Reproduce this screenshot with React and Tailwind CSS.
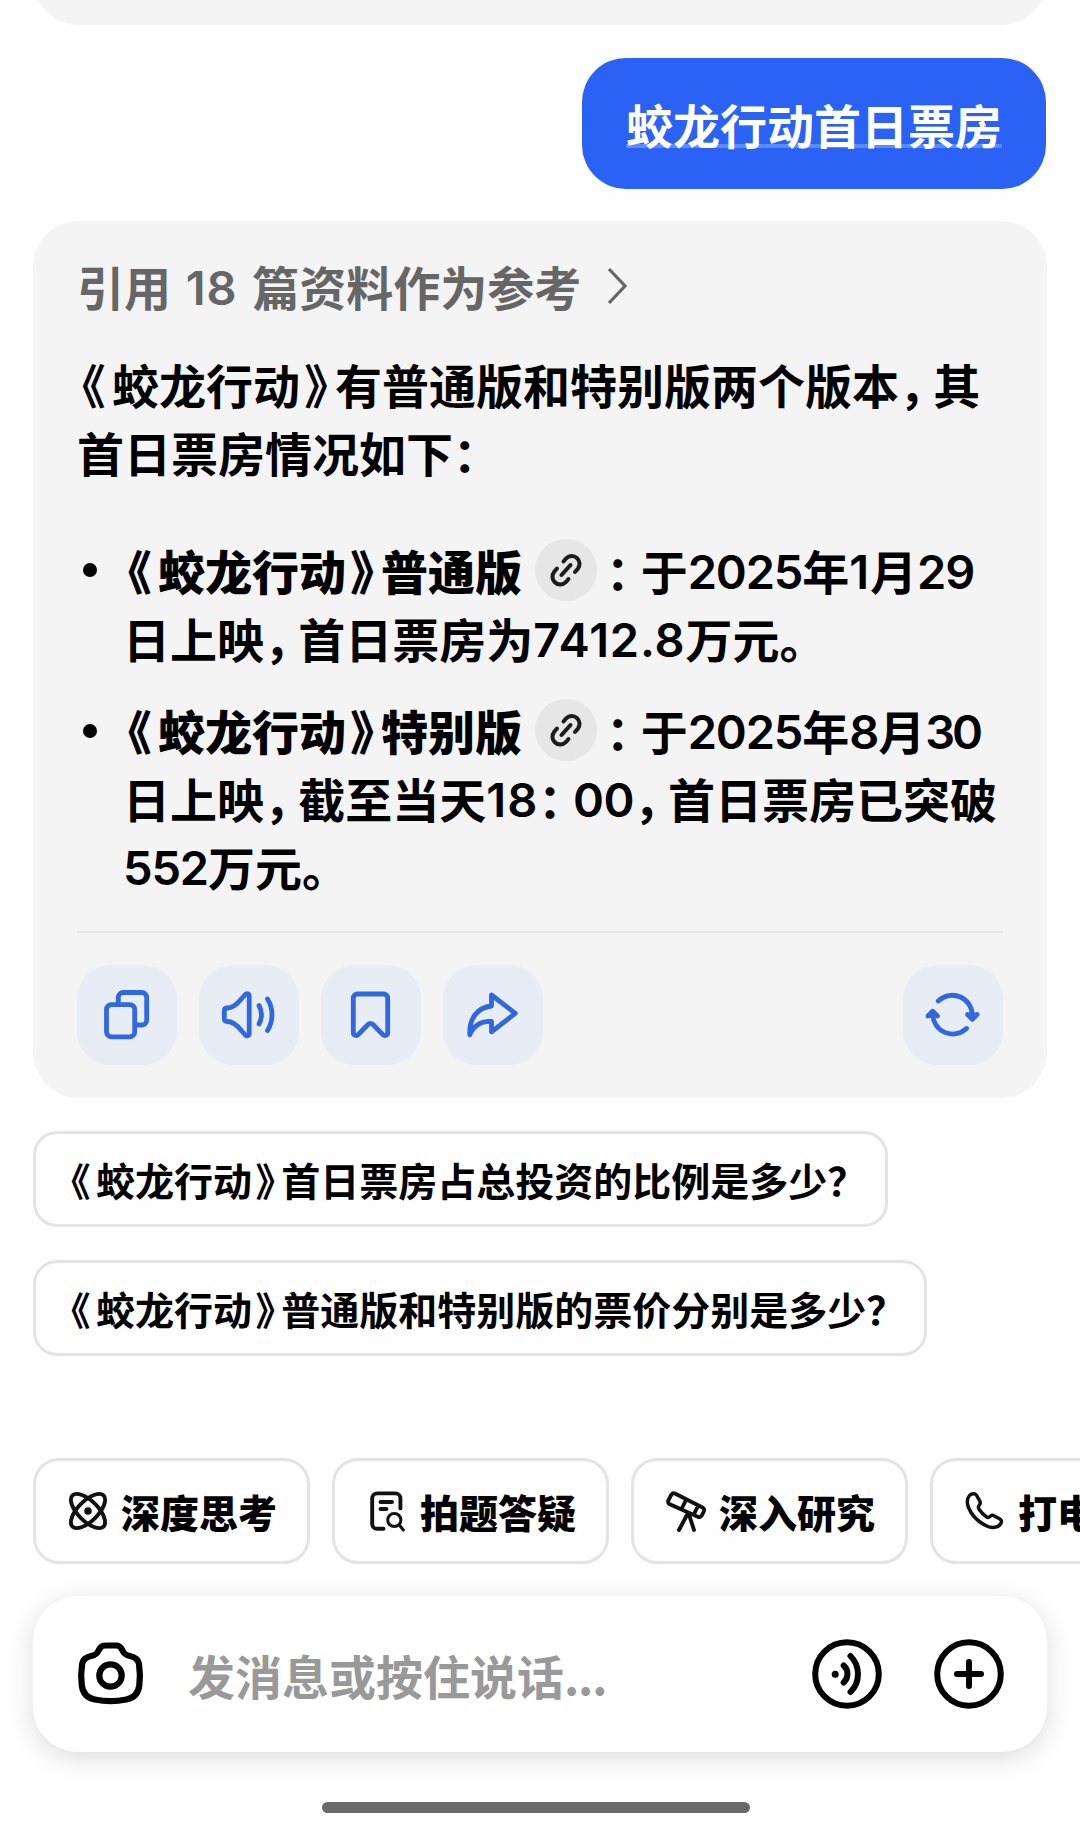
import React from "react";

// Full-width punctuation is set tighter than one em
const punctuation = {
    "《": "[font-feature-settings:'halt'] ml-[0.105em] mr-[0.14em]",
    "》": "[font-feature-settings:'halt'] ml-[0.09em] mr-[0.155em]",
    "，": "[font-feature-settings:'halt'] mr-[0.23em]",
    "：": "[font-feature-settings:'halt'] mr-[0.24em]",
    "？": "[font-feature-settings:'halt']",
};

const digitTracking = {
    "1": "tracking-[0.02em]",
    "18": "tracking-[0.022em]",
    "7412.8": "tracking-[0.018em]",
    "00": "tracking-[-0.015em]",
    "30": "tracking-[-0.065em]",
};

function Zh({ children }) {
    const parts = children.split(/([《》，：？]|[0-9.]+)/).filter(Boolean);
    return (
        <>
            {parts.map((part, i) => {
                if (punctuation[part]) {
                    return <span key={i} className={punctuation[part]}>{part}</span>;
                }
                if (/^[0-9.]+$/.test(part)) {
                    const tracking = digitTracking[part] || "tracking-[-0.025em]";
                    return <span key={i} className={`relative -top-px font-[Inter,sans-serif] leading-none ${tracking}`}>{part}</span>;
                }
                return part;
            })}
        </>
    );
}

function LinkBadge() {
    return (
        <span className="ml-[13px] mr-[9px] inline-flex size-[62px] items-center justify-center rounded-full bg-[#e6e6e6]">
            <svg width="34" height="34" viewBox="0 0 34 34" fill="none" stroke="#1c1c1c" strokeWidth="4" strokeLinecap="round">
                <path d="M14.500 8.500l2.700-3.200a7.800 7.800 0 0 1 11.600 10.400L26 19" />
                <path d="M19.500 26l-2.700 3.200A7.800 7.800 0 0 1 5.200 18.800L8 15.500" />
                <path d="M12.500 22l9-10" />
            </svg>
        </span>
    );
}

function ActionButton({ children }) {
    return (
        <button className="flex size-[100px] items-center justify-center rounded-[34px] bg-[#e7ecf5]">
            <svg width="60" height="60" viewBox="0 0 60 60" fill="none" stroke="#3068e0" strokeWidth="4.8" strokeLinecap="round" strokeLinejoin="round">
                {children}
            </svg>
        </button>
    );
}

function Answer() {
    return (
        <div className="mx-[33px] mt-[32px] flex h-[877px] flex-col rounded-[46px] bg-[#f4f4f4] px-[44px] text-[47px] leading-[68px] font-semibold whitespace-nowrap text-black">
            <div className="mt-[31px] flex items-center text-[#666]">
                <span className="[word-spacing:4px]"><Zh>引用 18 篇资料作为参考</Zh></span>
                <svg className="ml-[26px]" width="22" height="38" viewBox="0 0 22 38" fill="none" stroke="#666" strokeWidth="3.2">
                    <path d="M2 2l16 17L2 36" />
                </svg>
            </div>

            <div className="mt-[30px]">
                <p><Zh>《蛟龙行动》有普通版和特别版两个版本，其</Zh></p>
                <p><Zh>首日票房情况如下：</Zh></p>
            </div>

            <ul className="mt-[50px] flex flex-col gap-[24px]">
                <li className="flex">
                    <span className="mt-[27px] mr-[26px] ml-[6px] size-[14px] rounded-full bg-black" />
                    <div>
                        <div className="flex h-[68px] items-center">
                            <strong className="font-black"><Zh>《蛟龙行动》普通版</Zh></strong>
                            <LinkBadge />
                            <span><Zh>：于2025年1月29</Zh></span>
                        </div>
                        <p><Zh>日上映，首日票房为7412.8万元。</Zh></p>
                    </div>
                </li>
                <li className="flex">
                    <span className="mt-[28px] mr-[26px] ml-[6px] size-[14px] rounded-full bg-black" />
                    <div>
                        <div className="flex h-[68px] items-center">
                            <strong className="font-black"><Zh>《蛟龙行动》特别版</Zh></strong>
                            <LinkBadge />
                            <span><Zh>：于2025年8月30</Zh></span>
                        </div>
                        <p><Zh>日上映，截至当天18：00，首日票房已突破</Zh></p>
                        <p><Zh>552万元。</Zh></p>
                    </div>
                </li>
            </ul>

            <div className="mt-auto h-[2px] w-[926px] bg-[#e4e4e4]" />
            <div className="mt-[32px] mb-[33px] flex w-[926px] gap-[22px]">
                {/* Copy */}
                <ActionButton>
                    <path d="M21.300 18v-5.500a5 5 0 0 1 5-5h18.400a5 5 0 0 1 5 5V35a5 5 0 0 1-5 5h-5" />
                    <rect x="9.500" y="19.600" width="28.200" height="32.200" rx="5" />
                </ActionButton>
                {/* Read aloud */}
                <ActionButton>
                    <path d="M5.300 26c0-2 1-3 3-3 6 0 10-4 14-9l4-4.500c1.500-1.600 3.900-.8 3.900 1.500v37.500c0 2.300-2.400 3.100-3.900 1.500l-4-4.500c-4-5-8-9-14-9-2 0-3-1-3-3z" />
                    <path d="M40 20.500c3.200 6 3.200 12.500 0 18.500M48.500 14c6 9.500 6 22 0 31.500" />
                </ActionButton>
                {/* Bookmark */}
                <ActionButton>
                    <path d="M12.300 13a4 4 0 0 1 4-4h26.400a4 4 0 0 1 4 4v34.500c0 3-3 4-5 2L32 39.500c-1.500-1.500-3.500-1.500-5 0L17.300 49.500c-2 2-5 1-5-2z" />
                </ActionButton>
                {/* Share */}
                <ActionButton>
                    <path d="M28.500 10L52.300 28.300 28.500 46.800V36.500C18 36 11 40 6.800 49.800 6 34 14 22.500 28.500 21z" />
                </ActionButton>
                {/* Regenerate */}
                <span className="ml-auto">
                    <ActionButton>
                        <path d="M15.300 16A20 20 0 0 1 49.300 31" />
                        <path d="M44.500 29.500l4.800 4.800 4.800-4.800-4.800 1z" />
                        <path d="M43.500 43.500A20 20 0 0 1 9.700 29" />
                        <path d="M5 31l4.700-4.800 4.800 4.800-4.800-1z" />
                    </ActionButton>
                </span>
            </div>
        </div>
    );
}

function Suggestion({ children, width }) {
    return (
        <button className={`flex h-[96px] items-center rounded-[24px] border-[3px] border-[#e4e4e4] pl-[31px] text-[39px] leading-none font-semibold whitespace-nowrap text-black ${width}`}>
            <span><Zh>{children}</Zh></span>
        </button>
    );
}

function Tool({ label, children }) {
    return (
        <button className="flex h-[106px] w-[277px] shrink-0 items-center rounded-[26px] border-[3px] border-[#e4e4e4] pl-[29px] text-[39px] leading-none font-black whitespace-nowrap text-black">
            <svg width="46" height="46" viewBox="0 0 46 46" fill="none" stroke="#111" strokeWidth="3.9" strokeLinecap="round" strokeLinejoin="round">
                {children}
            </svg>
            <span className="ml-[10px]">{label}</span>
        </button>
    );
}

function Composer() {
    return (
        <div className="mx-[33px] mt-[32px] flex h-[156px] items-center rounded-[45px] bg-white pr-[43px] pl-[43px] shadow-[0_6px_24px_rgba(0,0,0,0.13)]">
            <svg width="68" height="66" viewBox="0 0 68 66" fill="none" stroke="#000" strokeWidth="6.200">
                <path d="M29 4.500h11c3 0 4.500 1 6 4 1.500 3.500 3 5.500 8 6.500s8 3 9 8c1 6.500 1.200 14.500.3 21.500-1 8-5.500 12.500-13 14-10 2-21.500 2-31.500 0-7.500-1.500-12-6-13-14-.9-7-.7-15 .3-21.500 1-5 4-7 9-8s6.500-3 8-6.500c1.500-3 3-4 6-4z" />
                <circle cx="34.500" cy="34.500" r="11.200" />
            </svg>
            <span className="ml-[44px] text-[47px] leading-none font-semibold whitespace-nowrap text-[#999]">
                发消息或按住说话<span className="tracking-[-0.025em]">...</span>
            </span>
            <div className="ml-auto flex gap-[52px]">
                <svg width="70" height="70" viewBox="0 0 70 70" fill="none" stroke="#000" strokeWidth="6" strokeLinecap="round">
                    <circle cx="35" cy="35" r="31.800" />
                    <circle cx="23.200" cy="35.300" r="3.500" fill="#000" stroke="none" />
                    <path d="M31.700 26.500c5 4.500 5 12.500 0 17M38.500 17c10 10 10 26 0 36" />
                </svg>
                <svg width="70" height="70" viewBox="0 0 70 70" fill="none" stroke="#000" strokeWidth="6" strokeLinecap="round">
                    <circle cx="35" cy="35" r="31.800" />
                    <path d="M35 23v24M23 35h24" />
                </svg>
            </div>
        </div>
    );
}

function App() {
    return (
        <div className="flex h-[1829px] w-[1080px] flex-col overflow-hidden bg-[#fefefe] font-['Noto_Sans_CJK_SC',sans-serif]" lang="zh-CN">
            <div className="mx-[33px] -mt-[75px] h-[100px] shrink-0 rounded-[46px] bg-[#f4f4f4]" />

            {/* User message */}
            <div className="mt-[33px] mr-[34px] flex h-[131px] w-[464px] items-center justify-center self-end rounded-[44px] bg-[#2b62f6] text-[47px] leading-none font-semibold whitespace-nowrap text-white">
                <span className="relative">
                    <span className="absolute inset-x-0 bottom-[-1px] h-[4px] bg-[#5b8bff]" />
                    <span className="relative">蛟龙行动首日票房</span>
                </span>
            </div>

            <Answer />

            <div className="mx-[33px] mt-[33px] flex flex-col gap-[33px]">
                <Suggestion width="w-[855px]">《蛟龙行动》首日票房占总投资的比例是多少？</Suggestion>
                <Suggestion width="w-[894px]">《蛟龙行动》普通版和特别版的票价分别是多少？</Suggestion>
            </div>

            <div className="mt-[102px] ml-[33px] flex gap-[22px]">
                <Tool label="深度思考">
                    <ellipse cx="23" cy="23" rx="22" ry="10" transform="rotate(45 23 23)" />
                    <ellipse cx="23" cy="23" rx="22" ry="10" transform="rotate(-45 23 23)" />
                    <circle cx="23" cy="23" r="3.800" fill="#111" stroke="none" />
                </Tool>
                <Tool label="拍题答疑">
                    <path d="M19.500 40.800h-6.300a5 5 0 0 1-5-5V10.400a5 5 0 0 1 5-5h18.200a5 5 0 0 1 5 5v10M16.500 14h11.500M16.500 21h6" />
                    <circle cx="30.300" cy="32" r="6.600" strokeWidth="3" />
                    <path d="M35.300 37l4 5" strokeWidth="3" />
                </Tool>
                <Tool label="深入研究">
                    <path d="M12 5.500l27.500 14a3 3 0 0 1 1.300 4l-2 4a3 3 0 0 1-4 1.300L6.800 16.300a3 3 0 0 1-1.400-4l2.800-5.400a3 3 0 0 1 3.800-1.400zM23 12l-4.500 9M35 18l-4 8M25 25l-9 17M25.500 25l5.500 17" />
                </Tool>
                <Tool label="打电话">
                    <path d="M7.500 7.500c2.500-2.500 6-2.500 7.500.5l3 5.500c.8 1.500.2 2.500-1 4-1 1.200-.8 2.300.2 4 2 3 4 5 7 7.200 1.500 1 2.700.8 3.800-.2 1.300-1.300 2.700-1.500 4-.8l5.500 3c2.200 1.300 2.500 3 1.200 5-2.700 4-8.500 5-14.500 2C15.500 33.500 9.500 27 6.500 19.500 4.800 15 5 10.500 7.500 7.500z" strokeWidth="3.500" />
                </Tool>
            </div>

            <Composer />

            <div className="mt-[50px] ml-[322px] h-[11px] w-[428px] shrink-0 rounded-full bg-[#696969]" />
        </div>
    );
}

export default App;
